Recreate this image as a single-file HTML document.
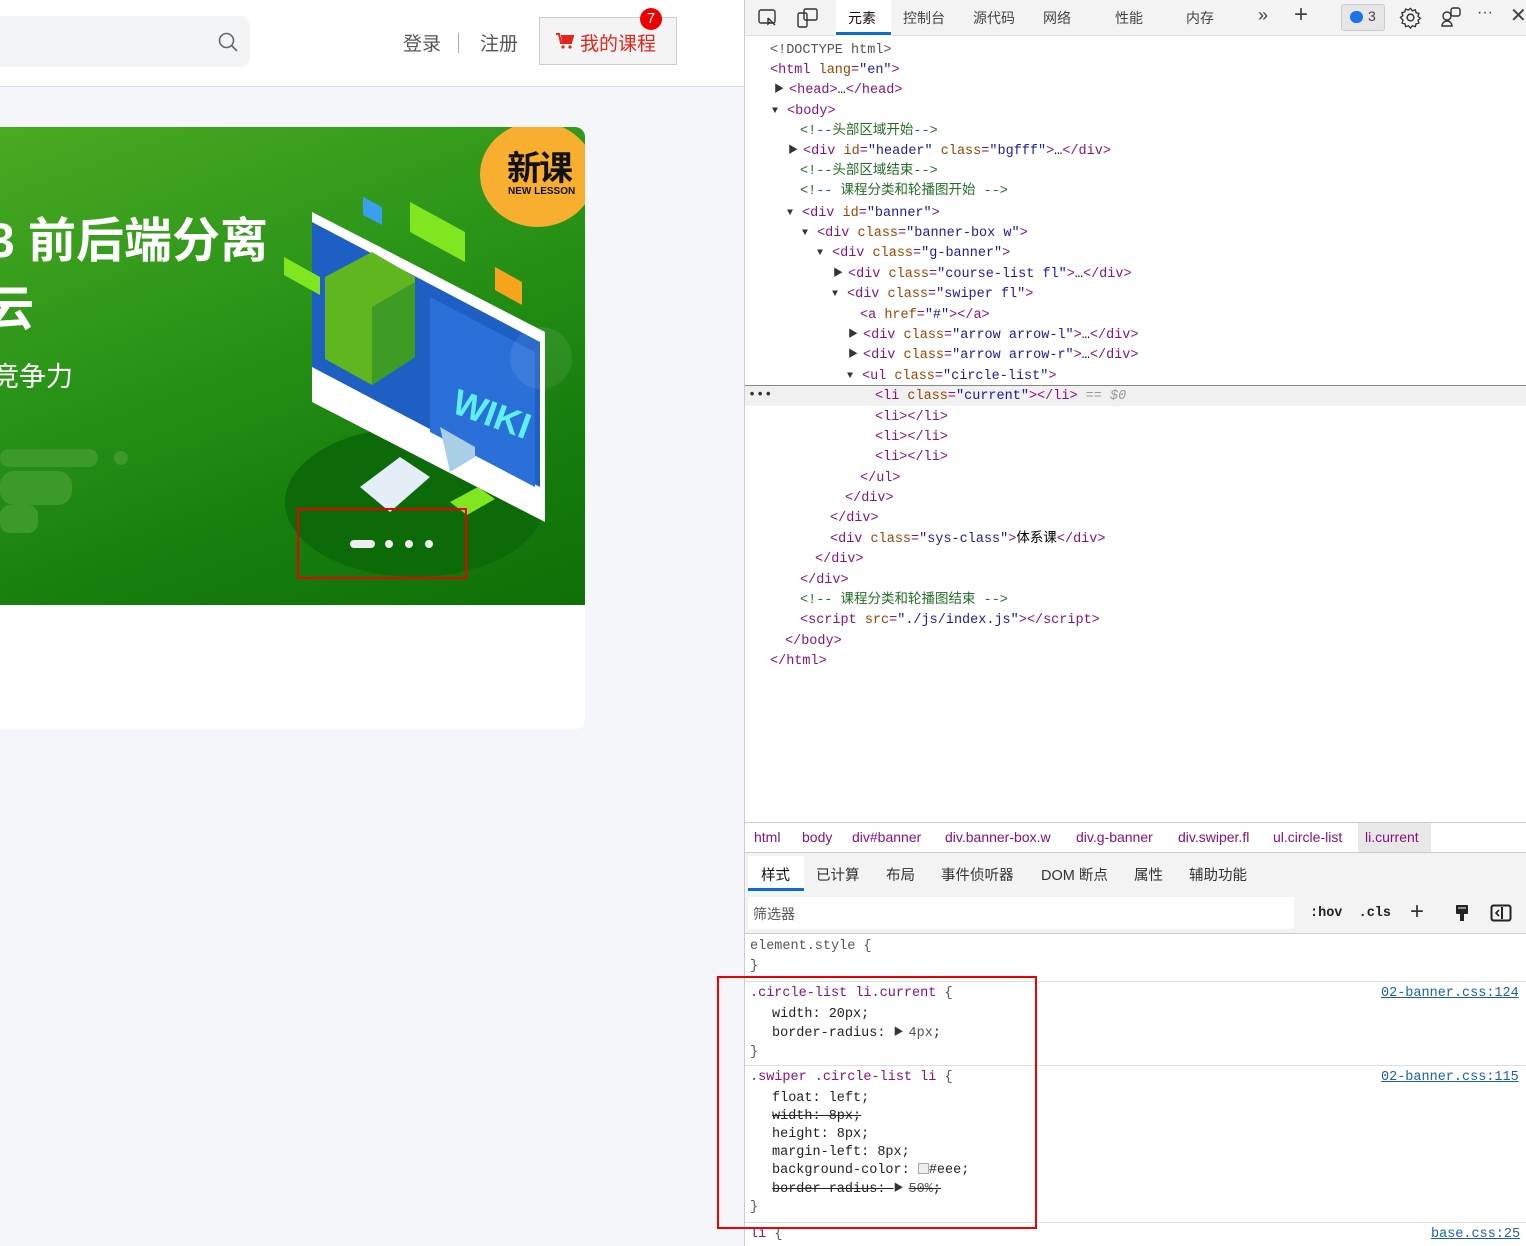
<!DOCTYPE html>
<html><head><meta charset="utf-8">
<style>
*{margin:0;padding:0;box-sizing:border-box}
body{width:1526px;height:1246px;overflow:hidden;position:relative;background:#fff;font-family:"Liberation Sans","Noto Sans CJK SC",sans-serif}
.a{position:absolute;white-space:pre}
.m{font-family:"Liberation Mono","Noto Sans CJK SC",monospace;font-size:13.5px;line-height:18px}
.t{color:#881280}.n{color:#994500}.v{color:#1a1aa6}.c{color:#236e25}.g{color:#555}
.ar{color:#333;font-size:10px;display:inline-block;width:15px;vertical-align:1px}
.tab{position:absolute;top:8px;font-size:14px;color:#444}
.bt{position:absolute;font-size:14.5px;color:#333}
.bc{position:absolute;top:829px;font-size:14px;color:#881280}
.dt{position:absolute;left:0;width:100%;top:2px}
</style></head><body>
<!-- left page -->
<div class="a" style="left:0;top:0;width:745px;height:86px;background:#fff"></div>
<div class="a" style="left:0;top:86px;width:745px;height:1px;background:#d3dbf5"></div>
<div class="a" style="left:0;top:87px;width:745px;height:1159px;background:#f5f6fa"></div>
<div class="a" style="left:-20px;top:16px;width:270px;height:51px;background:#f3f4f6;border-radius:10px"></div>
<svg class="a" style="left:217px;top:31px" width="22" height="22" viewBox="0 0 22 22"><circle cx="9.5" cy="9.5" r="7" fill="none" stroke="#666" stroke-width="1.6"/><path d="M14.5 14.5L20 20" stroke="#666" stroke-width="1.6"/></svg>
<div class="a" style="left:403px;top:29px;font-size:19px;color:#555">登录</div>
<div class="a" style="left:458px;top:33px;width:1px;height:20px;background:#aaa"></div>
<div class="a" style="left:480px;top:29px;font-size:19px;color:#555">注册</div>
<div class="a" style="left:539px;top:17px;width:138px;height:48px;border:1px solid #ccc;background:#f4f4f4"></div>
<svg class="a" style="left:556px;top:33px" width="18" height="17" viewBox="0 0 18 17"><path d="M0 1h3l2 9h10l2-7H5" fill="none" stroke="#e4251b" stroke-width="2"/><path d="M5 3h12l-2 7H6z" fill="#e4251b"/><circle cx="7" cy="14" r="1.6" fill="#e4251b"/><circle cx="14" cy="14" r="1.6" fill="#e4251b"/></svg>
<div class="a" style="left:580px;top:29px;font-size:19px;color:#e4251b">我的课程</div>
<div class="a" style="left:640px;top:8px;width:22px;height:22px;border-radius:11px;background:#e00;color:#fff;font-size:15px;text-align:center;line-height:22px">7</div>
<!-- banner -->
<div class="a" style="left:0;top:605px;width:585px;height:124px;background:#fff;border-radius:0 0 10px 0"></div>
<div class="a" style="left:0;top:127px;width:585px;height:478px;background:linear-gradient(160deg,#4aaa22 0%,#2a9418 40%,#157d0c 75%,#0f7008 100%);overflow:hidden;border-radius:0 10px 0 0">
 <div class="a" style="left:285px;top:300px;width:260px;height:150px;border-radius:50%;background:#0d6a08"></div>
 <div class="a" style="left:480px;top:-5px;width:115px;height:105px;border-radius:50%;background:#f8ae2e"></div>
 <div class="a" style="left:507px;top:14px;font-size:34px;font-weight:bold;color:#111;letter-spacing:-2px">新课</div>
 <div class="a" style="left:508px;top:59px;font-size:10px;font-weight:bold;color:#111">NEW LESSON</div>
 <div class="a" style="left:-12px;top:74px;font-size:48px;font-weight:bold;color:#fff">3 前后端分离</div>
 <div class="a" style="left:-14px;top:142px;font-size:48px;font-weight:bold;color:#fff">云</div>
 <div class="a" style="left:-8px;top:228px;font-size:27px;color:#fff">竞争力</div>
 <div class="a" style="left:0;top:322px;width:98px;height:18px;border-radius:9px;background:#3b9a2a"></div>
 <div class="a" style="left:114px;top:324px;width:14px;height:14px;border-radius:7px;background:#3b9a2a"></div>
 <div class="a" style="left:0;top:344px;width:72px;height:34px;border-radius:14px;background:#3b9a2a"></div>
 <div class="a" style="left:0;top:378px;width:38px;height:28px;border-radius:10px;background:#3b9a2a"></div>
 <svg class="a" style="left:270px;top:70px" width="300" height="330" viewBox="270 70 300 330">
  <polygon points="312,85 545,205 545,395 312,275" fill="#fff"/>
  <polygon points="312,95 540,215 540,360 312,240" fill="#1e5fc4"/>
  <polygon points="430,170 535,225 535,360 430,305" fill="#2a70d8"/>
  <polygon points="325,150 372,125 415,150 415,230 372,258 325,232" fill="#5fb61f"/>
  <polygon points="372,180 415,155 415,230 372,258" fill="#3e9c25"/>
  <polygon points="360,360 400,330 430,350 390,385" fill="#e4eef6"/>
  <polygon points="440,300 475,320 475,330 450,345" fill="#a9cfe6"/>
  <polygon points="410,75 465,105 465,135 410,105" fill="#7fe61f"/>
  <polygon points="284,130 320,150 320,168 284,148" fill="#7fe61f"/>
  <polygon points="363,70 382,80 382,98 363,88" fill="#3b9ff0"/>
  <polygon points="495,140 522,155 522,178 495,163" fill="#f8a41c"/>
  <polygon points="450,375 478,360 495,372 467,388" fill="#7fe61f"/>
  <text x="450" y="285" fill="#5ef0f0" font-size="36" font-weight="bold" font-family="Liberation Sans" transform="rotate(20 450 285)">WIKI</text>
 </svg>
 <div class="a" style="left:510px;top:200px;width:62px;height:62px;border-radius:31px;background:rgba(255,255,255,0.08)"></div>
 <div class="a" style="left:350px;top:413px;width:25px;height:8px;border-radius:4px;background:#eee"></div>
 <div class="a" style="left:385px;top:413px;width:8px;height:8px;border-radius:4px;background:#eee"></div>
 <div class="a" style="left:405px;top:413px;width:8px;height:8px;border-radius:4px;background:#eee"></div>
 <div class="a" style="left:425px;top:413px;width:8px;height:8px;border-radius:4px;background:#eee"></div>
</div>
<div class="a" style="left:297px;top:508px;width:170px;height:71px;border:2px solid #e00"></div>

<!-- devtools -->
<div class="a" style="left:744px;top:0;width:1px;height:1246px;background:#ccc"></div>
<div class="a" style="left:745px;top:0;width:781px;height:36px;background:#f3f3f3;border-bottom:1px solid #ddd"></div>
<div class="a" style="left:836px;top:0;width:55px;height:36px;background:#fff"></div>
<div class="a" style="left:836px;top:32px;width:55px;height:3px;background:#0a6ed1"></div>
<svg class="a" style="left:757px;top:7px" width="22" height="22"><rect x="2" y="3" width="16" height="13" rx="2" fill="none" stroke="#333" stroke-width="1.4"/><path d="M11 11l7 7M11 11v6l2-2" stroke="#333" stroke-width="1.4" fill="none"/></svg>
<svg class="a" style="left:796px;top:6px" width="24" height="24"><rect x="2" y="7" width="9" height="14" rx="1.5" fill="none" stroke="#333" stroke-width="1.4"/><rect x="8" y="3" width="13" height="11" rx="1.5" fill="none" stroke="#333" stroke-width="1.4"/></svg>
<div class="tab" style="left:848px;color:#111">元素</div>
<div class="tab" style="left:903px">控制台</div>
<div class="tab" style="left:973px">源代码</div>
<div class="tab" style="left:1043px">网络</div>
<div class="tab" style="left:1115px">性能</div>
<div class="tab" style="left:1186px">内存</div>
<div class="tab" style="left:1258px;font-size:18px;top:5px">»</div>
<div class="tab" style="left:1294px;font-size:24px;top:1px;font-weight:300">+</div>
<div class="a" style="left:1341px;top:4px;width:44px;height:27px;background:#e6e6e6;border:1px solid #ccc;border-radius:3px"></div>
<div class="a" style="left:1350px;top:11px;width:13px;height:12px;border-radius:6px;background:#1a73e8"></div>
<div class="tab" style="left:1368px">3</div>
<svg class="a" style="left:1399px;top:6px" width="23" height="23" viewBox="0 0 24 24"><circle cx="12" cy="12" r="3.5" fill="none" stroke="#333" stroke-width="1.5"/><path d="M12 2.5l2 2.5 3-1 .8 3 3 .8-1 3 2.5 2-2.5 2 1 3-3 .8-.8 3-3-1-2 2.5-2-2.5-3 1-.8-3-3-.8 1-3L1.5 12 4 10 3 7l3-.8L6.8 3.2l3 1z" fill="none" stroke="#333" stroke-width="1.4"/></svg>
<svg class="a" style="left:1440px;top:6px" width="22" height="22"><circle cx="7" cy="10" r="4" fill="none" stroke="#333" stroke-width="1.4"/><rect x="11" y="2" width="9" height="8" rx="2" fill="none" stroke="#333" stroke-width="1.4"/><path d="M2 20a5 5 0 0 1 10 0z" fill="none" stroke="#333" stroke-width="1.4"/></svg>
<div class="tab" style="left:1477px;font-size:16px;top:4px">···</div>
<div class="tab" style="left:1510px;font-size:20px;top:3px">✕</div>

<div class="a m g" style="left:770px;top:42px">&lt;!DOCTYPE html&gt;</div>
<div class="a m" style="left:770px;top:62px"><span class="t">&lt;html </span><span class="n">lang</span><span class="t">=</span><span class="v">"en"</span><span class="t">&gt;</span></div>
<div class="a m" style="left:774px;top:82px"><span class="ar">▶</span><span class="t">&lt;head&gt;</span>…<span class="t">&lt;/head&gt;</span></div>
<div class="a m" style="left:772px;top:103px"><span class="ar">▼</span><span class="t">&lt;body&gt;</span></div>
<div class="a m c" style="left:800px;top:123px">&lt;!--头部区域开始--&gt;</div>
<div class="a m" style="left:788px;top:143px"><span class="ar">▶</span><span class="t">&lt;div </span><span class="n">id</span><span class="t">=</span><span class="v">"header"</span> <span class="n">class</span><span class="t">=</span><span class="v">"bgfff"</span><span class="t">&gt;</span>…<span class="t">&lt;/div&gt;</span></div>
<div class="a m c" style="left:800px;top:163px">&lt;!--头部区域结束--&gt;</div>
<div class="a m c" style="left:800px;top:183px">&lt;!-- 课程分类和轮播图开始 --&gt;</div>
<div class="a m" style="left:787px;top:205px"><span class="ar">▼</span><span class="t">&lt;div </span><span class="n">id</span><span class="t">=</span><span class="v">"banner"</span><span class="t">&gt;</span></div>
<div class="a m" style="left:802px;top:225px"><span class="ar">▼</span><span class="t">&lt;div </span><span class="n">class</span><span class="t">=</span><span class="v">"banner-box w"</span><span class="t">&gt;</span></div>
<div class="a m" style="left:817px;top:245px"><span class="ar">▼</span><span class="t">&lt;div </span><span class="n">class</span><span class="t">=</span><span class="v">"g-banner"</span><span class="t">&gt;</span></div>
<div class="a m" style="left:833px;top:266px"><span class="ar">▶</span><span class="t">&lt;div </span><span class="n">class</span><span class="t">=</span><span class="v">"course-list fl"</span><span class="t">&gt;</span>…<span class="t">&lt;/div&gt;</span></div>
<div class="a m" style="left:832px;top:286px"><span class="ar">▼</span><span class="t">&lt;div </span><span class="n">class</span><span class="t">=</span><span class="v">"swiper fl"</span><span class="t">&gt;</span></div>
<div class="a m" style="left:860px;top:307px"><span class="t">&lt;a </span><span class="n">href</span><span class="t">=</span><span class="v">"#"</span><span class="t">&gt;&lt;/a&gt;</span></div>
<div class="a m" style="left:848px;top:327px"><span class="ar">▶</span><span class="t">&lt;div </span><span class="n">class</span><span class="t">=</span><span class="v">"arrow arrow-l"</span><span class="t">&gt;</span>…<span class="t">&lt;/div&gt;</span></div>
<div class="a m" style="left:848px;top:347px"><span class="ar">▶</span><span class="t">&lt;div </span><span class="n">class</span><span class="t">=</span><span class="v">"arrow arrow-r"</span><span class="t">&gt;</span>…<span class="t">&lt;/div&gt;</span></div>
<div class="a m" style="left:847px;top:368px"><span class="ar">▼</span><span class="t">&lt;ul </span><span class="n">class</span><span class="t">=</span><span class="v">"circle-list"</span><span class="t">&gt;</span></div>
<div class="a" style="left:745px;top:385px;width:781px;height:21px;background:#f0f0f0;border-top:1px solid #888"></div>
<div class="a m" style="left:748px;top:387px;color:#333">•••</div>
<div class="a m" style="left:875px;top:388px"><span class="t">&lt;li </span><span class="n">class</span><span class="t">=</span><span class="v">"current"</span><span class="t">&gt;&lt;/li&gt;</span> <span style="color:#999">== <i>$0</i></span></div>
<div class="a m t" style="left:875px;top:409px">&lt;li&gt;&lt;/li&gt;</div>
<div class="a m t" style="left:875px;top:429px">&lt;li&gt;&lt;/li&gt;</div>
<div class="a m t" style="left:875px;top:449px">&lt;li&gt;&lt;/li&gt;</div>
<div class="a m t" style="left:860px;top:470px">&lt;/ul&gt;</div>
<div class="a m t" style="left:845px;top:490px">&lt;/div&gt;</div>
<div class="a m t" style="left:830px;top:510px">&lt;/div&gt;</div>
<div class="a m" style="left:830px;top:531px"><span class="t">&lt;div </span><span class="n">class</span><span class="t">=</span><span class="v">"sys-class"</span><span class="t">&gt;</span>体系课<span class="t">&lt;/div&gt;</span></div>
<div class="a m t" style="left:815px;top:551px">&lt;/div&gt;</div>
<div class="a m t" style="left:800px;top:572px">&lt;/div&gt;</div>
<div class="a m c" style="left:800px;top:592px">&lt;!-- 课程分类和轮播图结束 --&gt;</div>
<div class="a m" style="left:800px;top:612px"><span class="t">&lt;script </span><span class="n">src</span><span class="t">=</span><span class="v">"./js/index.js"</span><span class="t">&gt;&lt;/script&gt;</span></div>
<div class="a m t" style="left:785px;top:633px">&lt;/body&gt;</div>
<div class="a m t" style="left:770px;top:653px">&lt;/html&gt;</div>

<div class="a" style="left:745px;top:822px;width:781px;height:1px;background:#ccc"></div>
<div class="a" style="left:1358px;top:823px;width:73px;height:29px;background:#e8e8e8"></div>
<div class="bc" style="left:754px">html</div>
<div class="bc" style="left:802px">body</div>
<div class="bc" style="left:852px">div#banner</div>
<div class="bc" style="left:945px">div.banner-box.w</div>
<div class="bc" style="left:1076px">div.g-banner</div>
<div class="bc" style="left:1178px">div.swiper.fl</div>
<div class="bc" style="left:1273px">ul.circle-list</div>
<div class="bc" style="left:1365px">li.current</div>
<div class="a" style="left:745px;top:852px;width:781px;height:82px;background:#f3f3f3;border-top:1px solid #ccc;border-bottom:1px solid #ccc"></div>
<div class="a" style="left:748px;top:856px;width:56px;height:35px;background:#fff"></div>
<div class="a" style="left:748px;top:888px;width:56px;height:3px;background:#0a6ed1"></div>
<div class="bt" style="left:761px;top:864px;color:#111">样式</div>
<div class="bt" style="left:816px;top:864px">已计算</div>
<div class="bt" style="left:886px;top:864px">布局</div>
<div class="bt" style="left:941px;top:864px">事件侦听器</div>
<div class="bt" style="left:1041px;top:864px">DOM 断点</div>
<div class="bt" style="left:1134px;top:864px">属性</div>
<div class="bt" style="left:1189px;top:864px">辅助功能</div>
<div class="a" style="left:748px;top:897px;width:546px;height:32px;background:#fff;border-radius:2px"></div>
<div class="bt" style="left:753px;top:904px;font-size:14px;color:#555">筛选器</div>
<div class="a m" style="left:1310px;top:905px;font-weight:bold;color:#222">:hov  .cls</div>
<div class="a" style="left:1410px;top:898px;font-size:24px;color:#333;font-weight:300">+</div>
<svg class="a" style="left:1453px;top:904px" width="18" height="18"><rect x="3" y="1" width="12" height="9" rx="1" fill="#222"/><rect x="7" y="10" width="4" height="7" fill="#222"/><path d="M5 4h8" stroke="#fff"/></svg>
<svg class="a" style="left:1490px;top:904px" width="22" height="18"><rect x="1.5" y="1.5" width="19" height="15" rx="2" fill="none" stroke="#222" stroke-width="2"/><path d="M12 3v12" stroke="#222" stroke-width="2"/><path d="M9 6l-3 3 3 3" stroke="#222" stroke-width="1.6" fill="none"/></svg>

<div class="a m g" style="left:750px;top:938px">element.style {</div>
<div class="a m g" style="left:750px;top:958px">}</div>
<div class="a" style="left:745px;top:981px;width:781px;height:1px;background:#ddd"></div>
<div class="a m" style="left:750px;top:985px"><span class="t">.circle-list li.current</span> <span class="g">{</span></div>
<div class="a m" style="left:1381px;top:985px;color:#1a5fb4;text-decoration:underline">02-banner.css:124</div>
<div class="a m" style="left:772px;top:1006px;color:#222">width: 20px;</div>
<div class="a m" style="left:772px;top:1025px;color:#222">border-radius: <span class="ar">▶</span><span class="g">4px</span>;</div>
<div class="a m g" style="left:750px;top:1044px">}</div>
<div class="a" style="left:745px;top:1065px;width:781px;height:1px;background:#ddd"></div>
<div class="a m" style="left:750px;top:1069px"><span class="t">.swiper .circle-list li</span> <span class="g">{</span></div>
<div class="a m" style="left:1381px;top:1069px;color:#1a5fb4;text-decoration:underline">02-banner.css:115</div>
<div class="a m" style="left:772px;top:1090px;color:#222">float: left;</div>
<div class="a m" style="left:772px;top:1108px;color:#222;text-decoration:line-through">width: 8px;</div>
<div class="a m" style="left:772px;top:1126px;color:#222">height: 8px;</div>
<div class="a m" style="left:772px;top:1144px;color:#222">margin-left: 8px;</div>
<div class="a m" style="left:772px;top:1162px;color:#222">background-color: <span style="display:inline-block;width:11px;height:11px;background:#eee;border:1px solid #aaa;vertical-align:-1px"></span>#eee;</div>
<div class="a m" style="left:772px;top:1181px;color:#222;text-decoration:line-through">border-radius: <span class="ar">▶</span><span class="g">50%</span>;</div>
<div class="a m g" style="left:750px;top:1199px">}</div>
<div class="a" style="left:745px;top:1222px;width:781px;height:1px;background:#ddd"></div>
<div class="a m" style="left:750px;top:1226px"><span class="t">li</span> <span class="g">{</span></div>
<div class="a m" style="left:1431px;top:1226px;color:#1a5fb4;text-decoration:underline">base.css:25</div>
<div class="a" style="left:717px;top:976px;width:320px;height:253px;border:2px solid #e00"></div>
</body></html>
